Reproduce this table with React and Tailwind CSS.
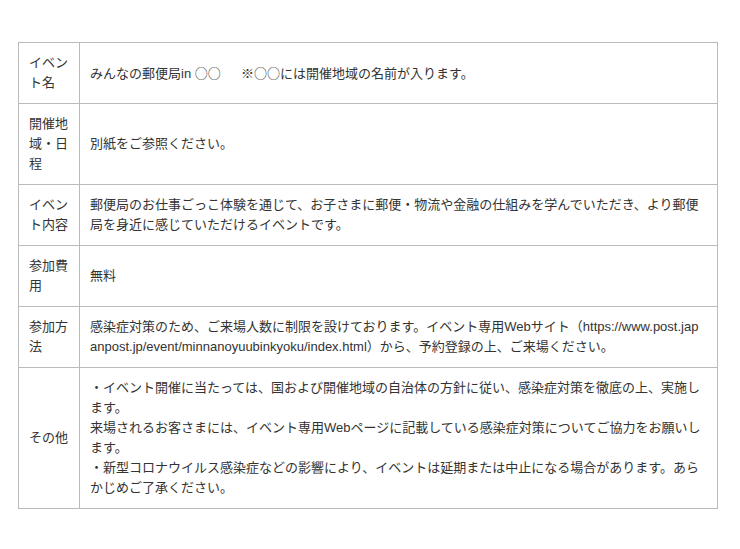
import React from 'react';

const jp = "font-['Noto_Sans_CJK_JP',sans-serif]";

const rows = [
  {
    label: 'イベント名',
    body: (
      <>
        みんなの郵便局in <span className={jp}>○○</span>
        <span className={jp}>{'\u3000'}</span>
        {'\u00a0\u00a0'}
        <span className={jp}>※○○</span>には開催地域の名前が入ります。
      </>
    ),
  },
  { label: '開催地域・日程', body: '別紙をご参照ください。' },
  {
    label: 'イベント内容',
    body: '郵便局のお仕事ごっこ体験を通じて、お子さまに郵便・物流や金融の仕組みを学んでいただき、より郵便局を身近に感じていただけるイベントです。',
  },
  { label: '参加費用', body: '無料' },
  {
    label: '参加方法',
    body: '感染症対策のため、ご来場人数に制限を設けております。イベント専用Webサイト（https://www.post.japanpost.jp/event/minnanoyuubinkyoku/index.html）から、予約登録の上、ご来場ください。',
  },
  {
    label: 'その他',
    body: (
      <>
        ・イベント開催に当たっては、国および開催地域の自治体の方針に従い、感染症対策を徹底の上、実施します。
        <br />
        来場されるお客さまには、イベント専用Webページに記載している感染症対策についてご協力をお願いします。
        <br />
        ・新型コロナウイルス感染症などの影響により、イベントは延期または中止になる場合があります。あらかじめご了承ください。
      </>
    ),
  },
];

export default function App() {
  return (
    <div className="min-h-[549px] bg-white pt-[42px] pl-[18px] text-[13px] leading-[20px] text-[#333] font-['Liberation_Sans',Arial,'Noto_Sans_CJK_JP',sans-serif]">
      <div className="w-[700px] border border-[#bbb]">
        {rows.map((row, i) => (
          <div
            key={row.label}
            className={i < rows.length - 1 ? 'flex border-b border-[#bbb]' : 'flex'}
          >
            <div className="w-[61px] shrink-0 border-r border-[#bbb] p-[10px] flex items-center break-all">
              {row.label}
            </div>
            <div className="flex-1 py-[10px] pl-[10px] pr-[14px] flex items-center">
              <div className="w-full break-all">{row.body}</div>
            </div>
          </div>
        ))}
      </div>
    </div>
  );
}
